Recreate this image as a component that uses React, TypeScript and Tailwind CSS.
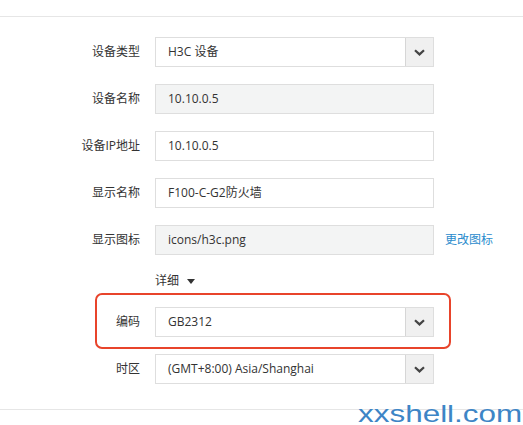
import React from 'react';

const font = { fontFamily: '"Open Sans", "Noto Sans CJK SC", sans-serif' };

function Chevron() {
  return (
    <svg width="11" height="7" viewBox="0 0 11 7" className="text-[#444]">
      <polyline points="1,1.2 5.5,5.4 10,1.2" fill="none" stroke="currentColor" strokeWidth="2.2" />
    </svg>
  );
}

function Label({ children }: { children: React.ReactNode }) {
  return <div className="w-[140px] shrink-0 text-right text-[12px] text-[#333]">{children}</div>;
}

function Select({ value }: { value: string }) {
  return (
    <div className="flex h-[30px] w-[279px] border border-[#dedede] bg-white">
      <div className="flex flex-1 items-center pl-[12px] text-[12px] text-[#333]">{value}</div>
      <div className="flex w-[28px] items-center justify-center border-l border-[#d6d6d6] bg-[#f0f0f0]">
        <Chevron />
      </div>
    </div>
  );
}

function Input({ value, readOnly }: { value: string; readOnly?: boolean }) {
  return (
    <div
      className={
        'flex h-[30px] w-[279px] items-center border border-[#dedede] pl-[12px] text-[12px] text-[#333] ' +
        (readOnly ? 'bg-[#f3f4f4]' : 'bg-white')
      }
    >
      {value}
    </div>
  );
}

function Row({ label, children }: { label: string; children: React.ReactNode }) {
  return (
    <div className="flex items-center gap-[15px]">
      <Label>{label}</Label>
      {children}
    </div>
  );
}

export default function App() {
  return (
    <div className="relative h-[425px] w-[523px] overflow-hidden bg-white" style={font}>
      <div className="h-[17px] border-b border-[#e6e6e6]" />

      <div className="flex flex-col gap-[17px] pt-[20px]">
        <Row label="设备类型">
          <Select value="H3C 设备" />
        </Row>
        <Row label="设备名称">
          <Input value="10.10.0.5" readOnly />
        </Row>
        <Row label="设备IP地址">
          <Input value="10.10.0.5" />
        </Row>
        <Row label="显示名称">
          <Input value="F100-C-G2防火墙" />
        </Row>
        <Row label="显示图标">
          <Input value="icons/h3c.png" readOnly />
          <span className="-ml-[4px] text-[12px] text-[#2b8ccd]">更改图标</span>
        </Row>

        <div className="flex h-[18px] items-center gap-[8px] pl-[155px] text-[12px] text-[#333]">
          <span>详细</span>
          <svg width="8" height="5" viewBox="0 0 8 5">
            <polygon points="0,0 8,0 4,5" fill="#333" />
          </svg>
        </div>

        <div className="relative">
          <Row label="编码">
            <Select value="GB2312" />
          </Row>
          <div className="absolute left-[95px] top-[-14px] h-[56px] w-[356px] rounded-[7px] border-2 border-[#e8442b]" />
        </div>

        <Row label="时区">
          <Select value="(GMT+8:00) Asia/Shanghai" />
        </Row>
      </div>

      <div className="mt-[25px] border-t border-[#e6e6e6]" />

      <div
        className="absolute left-[358px] top-[404px] origin-left scale-x-[1.31] text-[24px] leading-[20px] text-[#3d85c6]"
        style={{ fontFamily: '"Liberation Sans", Arial, sans-serif' }}
      >
        xxshell.com
      </div>
    </div>
  );
}
